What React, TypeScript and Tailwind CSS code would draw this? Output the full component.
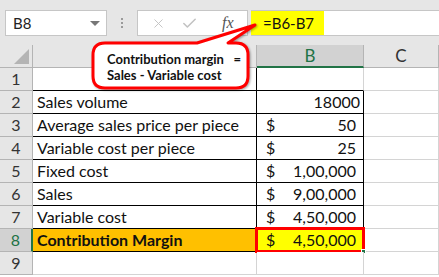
import React from 'react';
import { X, Check } from 'lucide-react';

type Row = { n: number; label?: string; dollar?: boolean; value?: string };

const rows: Row[] = [
  { n: 1 },
  { n: 2, label: 'Sales volume', value: '18000' },
  { n: 3, label: 'Average sales price per piece', dollar: true, value: '50' },
  { n: 4, label: 'Variable cost per piece', dollar: true, value: '25' },
  { n: 5, label: 'Fixed cost', dollar: true, value: '1,00,000' },
  { n: 6, label: 'Sales', dollar: true, value: '9,00,000' },
  { n: 7, label: 'Variable cost', dollar: true, value: '4,50,000' },
  { n: 8, label: 'Contribution Margin', dollar: true, value: '4,50,000' },
  { n: 9 },
];

const Toolbar = () => (
  <div className="h-[45px] flex items-start pt-[10px] bg-[#e6e6e6]">
    {/* name box */}
    <div className="ml-[5px] w-[102px] h-[26px] bg-white border border-[#c6c6c6] flex items-center justify-between pl-[7px] pr-[6px]">
      <span className="text-[15px] text-[#222]">B8</span>
      <span className="w-0 h-0 border-l-[5px] border-r-[5px] border-t-[5px] border-l-transparent border-r-transparent border-t-[#777]" />
    </div>
    <div className="w-[30px] h-[26px] flex flex-col items-center justify-center gap-[2px]">
      <span className="w-[2px] h-[2px] bg-[#9a9a9a]" />
      <span className="w-[2px] h-[2px] bg-[#9a9a9a]" />
      <span className="w-[2px] h-[2px] bg-[#9a9a9a]" />
    </div>
    <div className="w-[111px] h-[26px] bg-white border border-[#c6c6c6] flex items-center">
      <X className="ml-[13px] w-[15px] h-[15px] text-[#c2c2c2]" strokeWidth={1.5} />
      <Check className="ml-[15px] w-[17px] h-[17px] text-[#c2c2c2]" strokeWidth={2.2} />
      <span className="ml-[24px] text-[16px] italic text-[#555]" style={{ fontFamily: '"Liberation Serif", serif' }}>
        fx
      </span>
    </div>
    <div className="ml-[3px] flex-1 h-[26px] bg-white border-y border-[#c6c6c6] flex">
      <div className="w-[73px] h-full bg-[#ffff00] flex items-center pl-[12px] text-[15px] text-[#111]">=B6-B7</div>
    </div>
  </div>
);

const Callout = () => (
  <div className="absolute left-[88px] top-[20px] w-[172px] h-[72px]">
    <svg width="172" height="72" viewBox="88 20 172 72" className="absolute inset-0 drop-shadow-[1px_1px_1px_rgba(0,0,0,0.35)]">
      <path
        d="M105 43 L197 43 L255 25 L228 43 L236 43 Q248 43 248 55 L248 76 Q248 88 236 88 L105 88 Q93 88 93 76 L93 55 Q93 43 105 43 Z"
        fill="#ffffff"
        stroke="#ff0000"
        strokeWidth="3"
        strokeLinejoin="round"
      />
    </svg>
    <div className="absolute left-[19px] top-[31px] text-[13px] leading-[16px] font-bold text-[#111] whitespace-pre">
      {'Contribution margin   =\nSales - Variable cost'}
    </div>
  </div>
);

const Grid = () => {
  const gl = 'border-[#d4d4d4]';
  return (
    <div className="grid grid-cols-[33px_224px_107px_1fr] auto-rows-[23px] text-[16px] text-[#111]">
      {/* header */}
      <div className="relative bg-[#e6e6e6] border-r border-b border-[#b4b4b4]">
        <svg className="absolute right-[3px] bottom-[3px]" width="15" height="15">
          <polygon points="15,0 15,15 0,15" fill="#b4b4b4" />
        </svg>
      </div>
      <div className="bg-[#e6e6e6] border-r border-b border-[#b4b4b4]" />
      <div className="bg-[#d2d2d2] border-r border-[#b4b4b4] border-b-2 border-b-[#217346] flex items-center justify-center text-[17px] text-[#217346]">
        B
      </div>
      <div className="bg-[#e6e6e6] border-r border-b border-[#b4b4b4] flex items-center justify-center text-[17px] text-[#333]">
        C
      </div>

      {rows.map((r) => {
        const inTable = r.n >= 2 && r.n <= 8;
        const sel = r.n === 8;
        const topBlack = r.n === 1;
        return (
          <React.Fragment key={r.n}>
            <div
              className={
                sel
                  ? 'bg-[#d2d2d2] border-r-2 border-r-[#217346] border-b border-b-[#b4b4b4] flex items-center justify-center text-[#217346]'
                  : 'bg-[#e6e6e6] border-r border-b border-[#b4b4b4] flex items-center justify-center text-[#333]'
              }
            >
              {r.n}
            </div>
            <div
              className={
                (inTable || topBlack ? 'border-b border-black ' : `border-b ${gl} `) +
                (inTable ? 'border-r border-r-black ' : `border-r ${gl} `) +
                (sel ? 'bg-[#ffc000] font-bold ' : 'bg-white ') +
                'flex items-center pl-[4px] whitespace-nowrap overflow-hidden'
              }
            >
              {r.label}
            </div>
            <div
              className={
                (inTable || topBlack ? 'border-b border-b-black ' : `border-b ${gl} `) +
                (inTable ? 'border-r border-r-black ' : `border-r ${gl} `) +
                (sel ? 'bg-[#ffff00] ' : 'bg-white ') +
                'relative flex items-center'
              }
            >
              {r.dollar && <span className="absolute left-[9px]">$</span>}
              {r.value && (
                <span className={'ml-auto ' + (r.dollar ? 'mr-[7px]' : 'mr-[3px]')}>{r.value}</span>
              )}
              {sel && (
                <>
                  <span className="absolute -left-[2px] -top-[2px] -right-[2px] -bottom-[2px] border-[3px] border-[#ff0000]" />
                  <span className="absolute -right-[3px] -bottom-[3px] w-[5px] h-[5px] bg-[#217346] border border-white" />
                </>
              )}
            </div>
            <div className={`bg-white border-b border-r ${gl}`} />
          </React.Fragment>
        );
      })}
    </div>
  );
};

export default function App() {
  return (
    <div
      className="relative w-[439px] h-[277px] overflow-hidden bg-white"
      style={{ fontFamily: 'Lato, "Liberation Sans", sans-serif' }}
    >
      <Toolbar />
      <Grid />
      <Callout />
    </div>
  );
}
